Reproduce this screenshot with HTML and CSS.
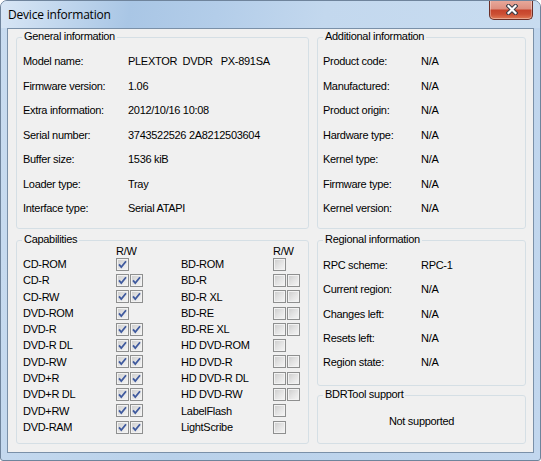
FILE: index.html
```html
<!DOCTYPE html>
<html lang="en">
<head>
    <meta charset="UTF-8">
    <title>Device information</title>
    <link rel="stylesheet" href="styles.css">
</head>
<body>
    <div class="window">
        <div class="titlebar">
            <span class="title">Device information</span>
            <div class="close">
                <svg width="12" height="11" viewBox="0 0 12 11">
                    <path d="M2.5 2 L9.5 9 M9.5 2 L2.5 9" stroke="#3b3b44" stroke-width="4.2" stroke-linecap="square" fill="none"/>
                    <path d="M2.5 2 L9.5 9 M9.5 2 L2.5 9" stroke="#ffffff" stroke-width="2.2" stroke-linecap="square" fill="none"/>
                </svg>
            </div>
        </div>

        <div class="client">
            <div class="column">
                <div class="group general">
                    <span class="caption">General information</span>
                    <div class="info wide">
                        <span>Model name:</span><span class="pre">PLEXTOR  DVDR   PX-891SA</span>
                        <span>Firmware version:</span><span>1.06</span>
                        <span>Extra information:</span><span>2012/10/16 10:08</span>
                        <span>Serial number:</span><span>3743522526 2A8212503604</span>
                        <span>Buffer size:</span><span>1536 kiB</span>
                        <span>Loader type:</span><span>Tray</span>
                        <span>Interface type:</span><span>Serial ATAPI</span>
                    </div>
                </div>

                <div class="group capabilities">
                    <span class="caption">Capabilities</span>
                    <div class="caps" id="caps">
                        <span></span><span>R/W</span><span></span><span>R/W</span>
                    </div>
                </div>
            </div>

            <div class="column">
                <div class="group additional">
                    <span class="caption">Additional information</span>
                    <div class="info">
                        <span>Product code:</span><span>N/A</span>
                        <span>Manufactured:</span><span>N/A</span>
                        <span>Product origin:</span><span>N/A</span>
                        <span>Hardware type:</span><span>N/A</span>
                        <span>Kernel type:</span><span>N/A</span>
                        <span>Firmware type:</span><span>N/A</span>
                        <span>Kernel version:</span><span>N/A</span>
                    </div>
                </div>

                <div class="group regional">
                    <span class="caption">Regional information</span>
                    <div class="info">
                        <span>RPC scheme:</span><span>RPC-1</span>
                        <span>Current region:</span><span>N/A</span>
                        <span>Changes left:</span><span>N/A</span>
                        <span>Resets left:</span><span>N/A</span>
                        <span>Region state:</span><span>N/A</span>
                    </div>
                </div>

                <div class="group bdrtool">
                    <span class="caption">BDRTool support</span>
                    <div class="notice">Not supported</div>
                </div>
            </div>
        </div>
    </div>

    <script>
        // name, read, write (null = no write box)
        const left = [
            ['CD-ROM', true, null], ['CD-R', true, true], ['CD-RW', true, true],
            ['DVD-ROM', true, null], ['DVD-R', true, true], ['DVD-R DL', true, true],
            ['DVD-RW', true, true], ['DVD+R', true, true], ['DVD+R DL', true, true],
            ['DVD+RW', true, true], ['DVD-RAM', true, true]
        ];
        const right = [
            ['BD-ROM', false, null], ['BD-R', false, false], ['BD-R XL', false, false],
            ['BD-RE', false, false], ['BD-RE XL', false, false], ['HD DVD-ROM', false, null],
            ['HD DVD-R', false, false], ['HD DVD-R DL', false, false], ['HD DVD-RW', false, false],
            ['LabelFlash', false, null], ['LightScribe', false, null]
        ];

        const tick = '<svg width="11" height="11" viewBox="0 0 11 11"><path d="M2 5.3 L4.3 8 L9 2.3" stroke="#3f5a9e" stroke-width="1.8" fill="none"/></svg>';

        function box(checked) {
            return '<span class="cb">' + (checked ? tick : '') + '</span>';
        }

        function cell(item) {
            let html = box(item[1]);
            if (item[2] !== null) html += box(item[2]);
            return '<span>' + item[0] + '</span><span class="checks">' + html + '</span>';
        }

        const caps = document.getElementById('caps');
        let rows = '';
        for (let i = 0; i < left.length; i++) {
            rows += cell(left[i]) + cell(right[i]);
        }
        caps.insertAdjacentHTML('beforeend', rows);
    </script>
</body>
</html>
```

FILE: styles.css
```css
body {
    margin: 0;
    font-family: "Liberation Sans", Arial, sans-serif;
    font-size: 11px;
    letter-spacing: -0.3px;
    color: #000;
}
.window {
    width: 541px;
    height: 461px;
    box-sizing: border-box;
    border: 1px solid #6f849c;
    border-radius: 7px 7px 3px 3px;
    background: linear-gradient(100deg, #c9dcf0 0%, #b9d1ea 40%, #c2d7ee 100%);
    display: flex;
    flex-direction: column;
    overflow: hidden;
}
.titlebar {
    height: 27px;
    flex-shrink: 0;
    display: flex;
    justify-content: space-between;
    align-items: flex-start;
    background: linear-gradient(100deg, #d8e6f5 0%, #c6daef 9%, #a9c6e5 24%, #b3cde9 40%, #c3d8ee 60%, #c8dcf0 100%);
}
.title {
    font-family: "Open Sans", "Noto Sans", sans-serif;
    font-size: 12px;
    letter-spacing: -0.2px;
    line-height: 16px;
    padding: 6px 0 0 7px;
    color: #000;
}
.close {
    width: 44px;
    height: 20px;
    margin: -1px 7px 0 0;
    box-sizing: border-box;
    border: 1px solid #6b2f27;
    border-top: none;
    border-radius: 0 0 5px 5px;
    background: linear-gradient(#e9ab9d 0%, #dd8e7e 48%, #c6432b 52%, #cc4f34 75%, #e07a55 100%);
    box-shadow: inset 0 0 0 1px rgba(255, 255, 255, 0.35);
    display: flex;
    align-items: center;
    justify-content: center;
}
.close svg {
    display: block;
    margin-left: 1px;
}
.client {
    flex: 1;
    margin: 0 6px 7px 6px;
    border: 1px solid #7a90a8;
    background: #f0f0f0;
    padding: 8px 7px 8px 8px;
    display: grid;
    grid-template-columns: 293px 209px;
    column-gap: 8px;
}
.column {
    display: flex;
    flex-direction: column;
}
.group {
    position: relative;
    box-sizing: border-box;
    border: 1px solid #d5dfe5;
    border-radius: 3px;
}
.caption {
    position: absolute;
    top: -8px;
    left: 5px;
    padding: 0 2px;
    line-height: 13px;
    background: #f0f0f0;
}
.general, .additional {
    height: 192px;
    margin-bottom: 11px;
}
.capabilities {
    flex: 1;
}
.regional {
    height: 146px;
    margin-bottom: 9px;
}
.bdrtool {
    flex: 1;
}
.info {
    display: grid;
    grid-template-columns: 98px 1fr;
    grid-auto-rows: 24.5px;
    line-height: 24.5px;
    padding: 11px 0 0 5px;
}
.info.wide {
    grid-template-columns: 105px 1fr;
    padding-left: 6px;
}
.regional .info {
    padding-top: 12px;
    grid-auto-rows: 24.3px;
    line-height: 24.3px;
}
.pre {
    white-space: pre;
}
.caps {
    display: grid;
    grid-template-columns: 93px 65px 92px 1fr;
    grid-template-rows: 10px;
    grid-auto-rows: 16.3px;
    line-height: 16.3px;
    padding: 5px 0 0 6px;
}
.caps > span:nth-child(-n+4) {
    line-height: 10px;
}
.checks {
    display: flex;
    align-items: center;
    gap: 1px;
}
.cb {
    width: 13px;
    height: 13px;
    box-sizing: border-box;
    border: 1px solid #8e8f8f;
    background: linear-gradient(135deg, #cbcbcb 0%, #e3e3e3 50%, #f6f6f6 100%);
    box-shadow: inset 0 0 0 1px #f2f2f2;
}
.cb svg {
    display: block;
}
.notice {
    height: 100%;
    display: flex;
    align-items: center;
    justify-content: center;
    padding-top: 2px;
    box-sizing: border-box;
}
```
